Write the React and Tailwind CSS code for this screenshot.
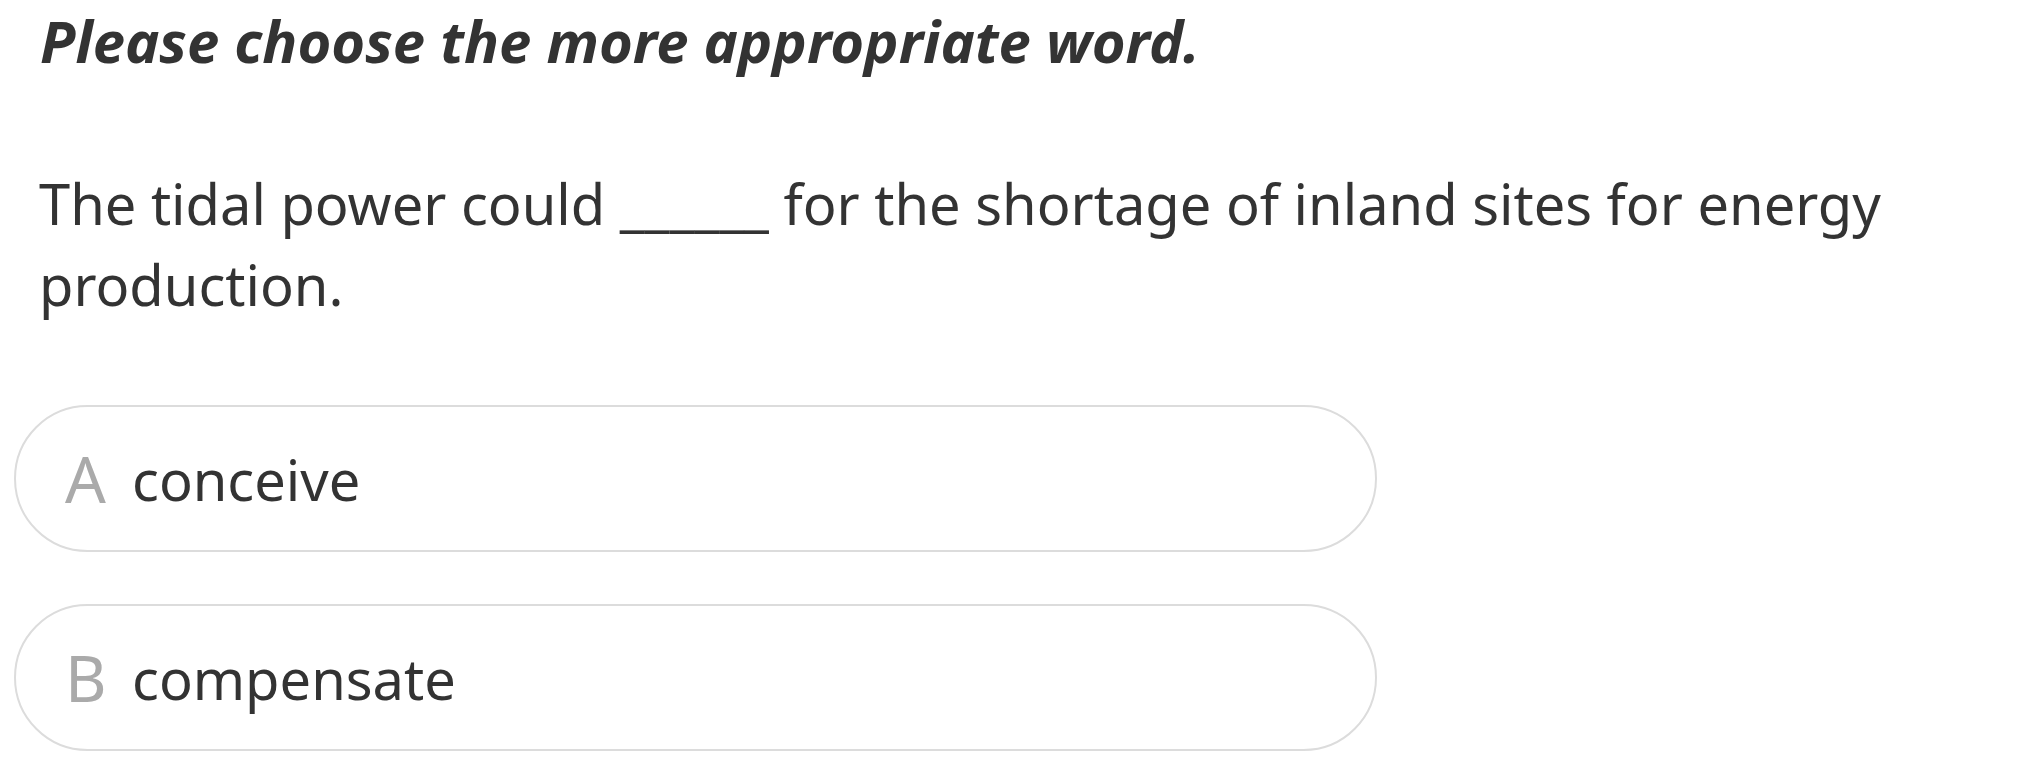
export default function App() {
  const font = { fontFamily: '"Noto Sans", "Open Sans", sans-serif' };
  return (
    <div className="w-[2037px] h-[784px] bg-white text-[#333333] overflow-hidden" style={font}>
      <div className="pl-[40px] pt-[5px]">
        <h1 className="text-[58px] leading-[72px] font-bold italic">Please choose the more appropriate word.</h1>
      </div>
      <div className="pl-[39px] pr-[140px] mt-[86px] text-[56px] leading-[81px]">
        The tidal power could ______ for the shortage of inland sites for energy production.
      </div>
      <div className="mt-[80px] pl-[14px] flex flex-col gap-[52px]">
        {[
          ["A", "conceive"],
          ["B", "compensate"],
        ].map(([k, v]) => (
          <div key={k} className="w-[1363px] h-[147px] rounded-full border-2 border-[#dcdcdc] flex items-center pl-[49px]">
            <span className="text-[64px] text-[#aaaaaa] w-[67px]">{k}</span>
            <span className="text-[56px]">{v}</span>
          </div>
        ))}
      </div>
    </div>
  );
}
